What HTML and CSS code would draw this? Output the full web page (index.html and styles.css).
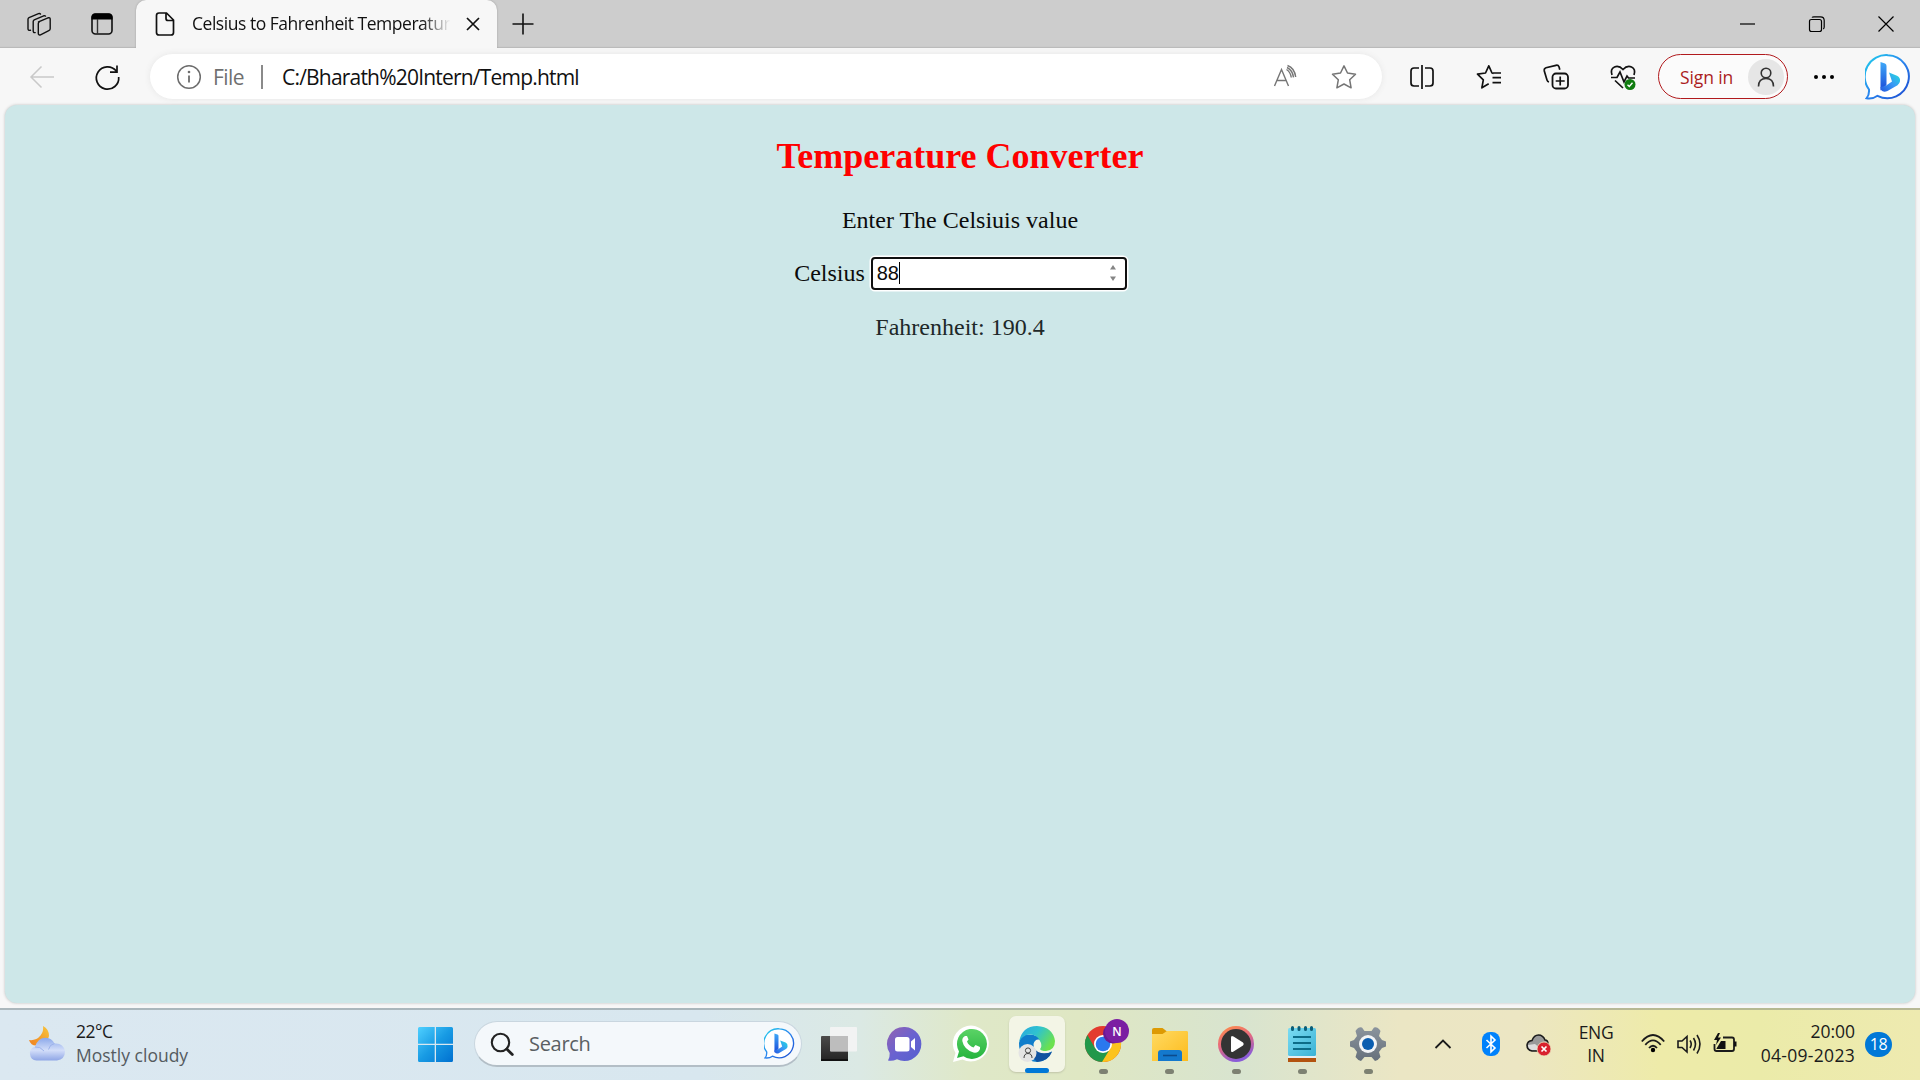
FILE: index.html
```html
<!DOCTYPE html>
<html lang="en">
<head>
<meta charset="utf-8">
<title>Celsius to Fahrenheit Temperature Converter</title>
<link rel="stylesheet" href="styles.css">
</head>
<body>
<svg width="0" height="0" class="defs">
  <defs>
    <linearGradient id="bingLine" x1="0" y1="0" x2="1" y2="1"><stop offset="0" stop-color="#20d0ec"/><stop offset=".5" stop-color="#2a86ee"/><stop offset="1" stop-color="#1b48cf"/></linearGradient>
    <linearGradient id="bingStem" x1="0" y1="0" x2="0" y2="1"><stop offset="0" stop-color="#3fa9f8"/><stop offset="1" stop-color="#1b4ad8"/></linearGradient>
    <linearGradient id="bingBowl" x1="0" y1="1" x2="1" y2="0"><stop offset="0" stop-color="#2358de"/><stop offset=".5" stop-color="#3a98f5"/><stop offset="1" stop-color="#1fe0dc"/></linearGradient>
    <linearGradient id="win" x1="0" y1="0" x2="1" y2="1"><stop offset="0" stop-color="#4fd0ff"/><stop offset=".5" stop-color="#189be4"/><stop offset="1" stop-color="#0070d0"/></linearGradient>
    <linearGradient id="moon" x1="0" y1="1" x2="1" y2="0"><stop offset="0" stop-color="#ef7f20"/><stop offset="1" stop-color="#f8c63c"/></linearGradient>
    <linearGradient id="cloud" x1="0" y1="0" x2="0" y2="1"><stop offset="0" stop-color="#8ba8ea"/><stop offset=".55" stop-color="#d3def9"/><stop offset="1" stop-color="#8fa6e6"/></linearGradient>
    <linearGradient id="dark" x1="0" y1="0" x2="0" y2="1"><stop offset="0" stop-color="#4b4b4a"/><stop offset="1" stop-color="#232323"/></linearGradient>
    <linearGradient id="chat" x1="0" y1="0" x2="1" y2="1"><stop offset="0" stop-color="#9462b0"/><stop offset=".5" stop-color="#6a62d0"/><stop offset="1" stop-color="#5560cf"/></linearGradient>
    <linearGradient id="wa" x1="0" y1="0" x2="0" y2="1"><stop offset="0" stop-color="#5bd366"/><stop offset="1" stop-color="#26b43e"/></linearGradient>
    <linearGradient id="edgeTop" x1="0" y1="0" x2="1" y2=".5"><stop offset="0" stop-color="#2aa5e0"/><stop offset=".5" stop-color="#2fc3cf"/><stop offset="1" stop-color="#6be14e"/></linearGradient>
    <linearGradient id="folder" x1="0" y1="0" x2="1" y2="1"><stop offset="0" stop-color="#ffda62"/><stop offset="1" stop-color="#fdbb1c"/></linearGradient>
    <linearGradient id="ring" x1="0" y1="0" x2=".4" y2="1"><stop offset="0" stop-color="#ff9245"/><stop offset=".5" stop-color="#e8697c"/><stop offset="1" stop-color="#8a5cd8"/></linearGradient>
    <linearGradient id="note" x1="0" y1="0" x2="1" y2="1"><stop offset="0" stop-color="#7bdcf3"/><stop offset="1" stop-color="#3bb2d5"/></linearGradient>
    <linearGradient id="gear" x1="0" y1="0" x2="0" y2="1"><stop offset="0" stop-color="#8b949d"/><stop offset="1" stop-color="#66707b"/></linearGradient>
    <symbol id="bing" viewBox="0 0 46 46">
      <path d="M23 1.2A21.500 21.500 0 1 1 12.500 41.800C9.500 44 5.500 44.900 1.500 44.300C3.500 42 4.300 39 4 35.500A21.500 21.500 0 0 1 23 1.200Z" fill="#fff" stroke="url(#bingLine)" stroke-width="2"/>
      <path d="M15.500 8l4.500 1.600q1.500.6 1.500 2.300V31l-6 5.500Z" fill="url(#bingStem)"/>
      <path d="M24 18.500l8 3.200q3.500 1.800 3 5.600-.3 2.400-2.500 4l-10 5.700q-4 2-6.500-1L15.500 33l5 -1 6.500-4.500Z" fill="url(#bingBowl)"/>
    </symbol>
  </defs>
</svg>
<div class="screen">
  <header class="tabs">
    <div class="tab-tools">
      <svg class="i24" viewBox="0 0 24 24"><g fill="none" stroke="#111" stroke-width="1.400" stroke-linejoin="round" stroke-linecap="round"><path d="M11.500 9.800l9.500-4q2.200-.5 2.200 1.400v9.600q0 1.200-1.400 1.900l-8.300 4.100q-2.200.7-2.200-1.500V11.400q0-1.100 1-1.600Z"/><path d="M8.200 20.600q-2 .3-2-1.600V9.400q0-1.100 1-1.600l9.500-4q1.300-.3 1.800.3"/><path d="M3.500 18.300Q1 18.700 1 16.800V7.200q0-1.100 1-1.600l9.500-4q1.500-.4 2 .5"/></g></svg>
      <svg class="i24" viewBox="0 0 24 24"><rect x="2" y="2" width="20" height="20" rx="3.500" fill="none" stroke="#111" stroke-width="1.600"/><path d="M1.500 7.500V5Q1.500 1.500 5 1.500H19Q22.500 1.500 22.500 5V7.500Z"/><path d="M7.500 7V22" stroke="#333" stroke-width="1.400"/></svg>
    </div>
    <div class="tab">
      <svg class="i24" viewBox="0 0 24 24"><path d="M6 1h7.500L20.500 8v12.500q0 2.500-2.500 2.500H6q-2.500 0-2.500-2.500v-17Q3.500 1 6 1ZM13 1v5.500q0 2 2 2h5.500" fill="none" stroke="#111" stroke-width="1.700"/></svg>
      <span class="tab-title">Celsius to Fahrenheit Temperature</span>
      <svg class="i14" viewBox="0 0 14 14"><path d="M1 1l12 12M13 1L1 13" stroke="#111" stroke-width="1.700"/></svg>
    </div>
    <svg class="i24 plus" viewBox="0 0 24 24"><path d="M12 1.500v21M1.500 12h21" stroke="#111" stroke-width="1.600"/></svg>
    <div class="window-buttons">
      <svg class="i16" viewBox="0 0 16 16"><path d="M0 8h15" stroke="#000" stroke-width="1.200"/></svg>
      <svg class="i16" viewBox="0 0 16 16"><path d="M2.500 3.500h8q2 0 2 2v8q0 2-2 2h-8q-2 0-2-2v-8q0-2 2-2ZM3 1.500Q3.500.8 5 .8h6.500q3.700 0 3.700 3.700V11q0 1.500-1 2" fill="none" stroke="#000" stroke-width="1.200"/></svg>
      <svg class="i16" viewBox="0 0 16 16"><path d="M.5.500l15 15M15.500.500l-15 15" stroke="#000" stroke-width="1.200"/></svg>
    </div>
  </header>
  <nav class="toolbar">
    <svg class="i26" viewBox="0 0 26 26"><path d="M25 13H2M12.500 2.500L2 13l10.500 10.500" fill="none" stroke="#c9c9c9" stroke-width="1.500"/></svg>
    <svg class="i26" viewBox="0 0 26 26"><path d="M22.300 7A11.200 11.200 0 1 0 24.700 13M23 1.500V8.200H16" fill="none" stroke="#111" stroke-width="1.700"/></svg>
    <div class="address">
      <svg class="i26" viewBox="0 0 26 26"><circle cx="13" cy="13" r="11.300" fill="none" stroke="#6d6d6d" stroke-width="1.500"/><path d="M13 11.500v7" stroke="#6d6d6d" stroke-width="1.800"/><circle cx="13" cy="8" r="1.300" fill="#6d6d6d"/></svg>
      <span class="scheme">File</span>
      <span class="divider"></span>
      <span class="url">C:/Bharath%20Intern/Temp.html</span>
      <svg class="i26 read" viewBox="0 0 26 26"><path d="M2.500 22L9.500 5.500 16.500 22M5 16.500h9M14.500 5.500q4 2.500 4.800 8M15.500 1.500q7 2.500 8.200 11.500M15 3.500q5.500 2.700 6.500 9.800" fill="none" stroke="#757575" stroke-width="1.400"/></svg>
      <svg class="i26" viewBox="0 0 26 26"><path d="M13 1.800l3.500 7.200 8 1.200-5.800 5.600 1.400 8L13 20l-7.100 3.800 1.400-8L1.500 10.200l8-1.200Z" fill="none" stroke="#757575" stroke-width="1.500" stroke-linejoin="round"/></svg>
    </div>
    <div class="actions">
      <svg class="i26" viewBox="0 0 26 26"><path d="M10 4H5Q2 4 2 7v12q0 3 3 3h5M16 4h5q3 0 3 3v12q0 3-3 3h-5M13 1v24" fill="none" stroke="#111" stroke-width="1.700"/></svg>
      <svg class="i26" viewBox="0 0 26 26"><path d="M17.500 9.300L16 9l-3.200-7.200L9.500 9l-8 1.200 5.800 5.600-1.400 8 6.800-4M16.500 13.700H25M16.500 18.700H25M17 9h8" fill="none" stroke="#111" stroke-width="1.700" stroke-linejoin="round"/></svg>
      <svg class="i26" viewBox="0 0 26 26"><rect x="9.500" y="9.500" width="15.500" height="15" rx="3.500" fill="none" stroke="#111" stroke-width="1.800"/><path d="M17.200 12.500v9M12.700 17h9M6 18q-1.500-.3-2-2L1.300 7Q.8 4.500 3 3.700L13 1.300q2.200-.5 3 1.500l.8 3" fill="none" stroke="#111" stroke-width="1.700"/></svg>
      <svg class="i26" viewBox="0 0 26 26"><path d="M2 11Q0 5 4.500 3 9 1.200 13 5.500 17 1.200 21.500 3 26 5 24 11M1 13.500h6l3-5.500 4 10 3-6 1.500 2H25M5 16.500l8 7.500" fill="none" stroke="#111" stroke-width="1.700"/><circle cx="20" cy="20.500" r="5.500" fill="#107c10"/><path d="M17.500 20.700l1.800 1.800 3.200-3.700" fill="none" stroke="#fff" stroke-width="1.400"/></svg>
    </div>
    <div class="signin"><span>Sign in</span><div class="avatar"><svg class="i22" viewBox="0 0 22 22"><circle cx="11" cy="7" r="4.800" fill="none" stroke="#333" stroke-width="1.600"/><path d="M3.500 20.500q0-8 7.500-8t7.500 8" fill="none" stroke="#333" stroke-width="1.600"/></svg></div></div>
    <svg class="dots" viewBox="0 0 22 6"><circle cx="3" cy="3" r="2"/><circle cx="11" cy="3" r="2"/><circle cx="19" cy="3" r="2"/></svg>
    <svg class="bing-big"><use href="#bing"/></svg>
  </nav>
  <main class="page">
    <h1>Temperature Converter</h1>
    <p>Enter The Celsiuis value</p>
    <div class="field"><label>Celsius</label><div class="input"><span class="value">88</span><svg class="spin" viewBox="0 0 8 18"><path d="M1 5.500L4 1l3 4.500ZM1 12.500L4 17l3-4.500Z" fill="#858585"/></svg></div></div>
    <p class="result">Fahrenheit: 190.4</p>
  </main>
  <footer class="taskbar">
    <div class="weather">
      <svg class="i36" viewBox="0 0 36 36"><path d="M14 0Q15 5 11.500 9.500 7 15 0 14 2 20 8 19.500A11 11 0 0 0 20 10Q20 3 14 0Z" fill="url(#moon)"/><path d="M7.500 34.500A7 7 0 0 1 6 20.800Q9 11.500 17 11.800 22.500 12 25.500 17.500 34 16.500 36 25q0 8.500-8 9.500Z" fill="url(#cloud)"/><path d="M6 21q5-1 9 4M25.500 17.500q-5 1-6 6" fill="none" stroke="#9db3ea" stroke-width="1"/></svg>
      <div class="weather-text"><span>22°C</span><span class="muted">Mostly cloudy</span></div>
    </div>
    <div class="center">
      <svg class="start" viewBox="0 0 35 35"><path d="M1.500 0H16.700V16.700H0V1.500Q0 0 1.500 0ZM18 0H33.500Q35 0 35 1.500V16.700H18ZM0 18H16.700V35H1.500Q0 35 0 33.500ZM18 18H35V33.500Q35 35 33.500 35H18Z" fill="url(#win)"/></svg>
      <div class="search"><svg class="i24" viewBox="0 0 24 24"><circle cx="10.500" cy="10.500" r="8.700" fill="none" stroke="#222" stroke-width="2.100"/><path d="M16.800 17l5.500 5.500" stroke="#222" stroke-width="2.800" stroke-linecap="round"/></svg><span>Search</span><svg class="bing-small"><use href="#bing"/></svg></div>
      <div class="apps">
        <div class="app"><svg class="i36" viewBox="0 0 36 36"><rect y="10" width="27" height="25" rx="1" fill="url(#dark)"/><rect y="33" width="27" height="2" fill="#111"/><rect x="9" y="1" width="27" height="24.500" rx="1" fill="#f3f3f3" opacity=".95"/><rect x="9" y="10" width="18" height="15" fill="#bdbdbd"/></svg></div>
        <div class="app"><svg class="i36" viewBox="0 0 36 36"><path d="M18 1A17 17 0 1 1 10 33.300Q5 35.500 1 34.500 3 31 2.700 27A17 17 0 0 1 18 1Z" fill="url(#chat)"/><rect x="8" y="11" width="14.500" height="14.500" rx="2.500" fill="#fff"/><path d="M24 15.500L28 12v12.500L24 21Z" fill="#fff"/></svg></div>
        <div class="app"><svg class="i36" viewBox="0 0 36 36"><path d="M0 36L2.500 27A18 18 0 1 1 9.500 33.500Z" fill="#fff"/><path d="M4 32L6 25.500A15 15 0 1 1 10.500 30.300Z" fill="url(#wa)"/><path d="M12 10q-3 1.500-2.700 5Q11 23.500 20.500 26.500q5 .8 6.500-3.500v-2L22.500 19l-2 2.500Q15.500 19.500 14 15.500l1.500-2L14 10Z" fill="#fff"/></svg></div>
        <div class="app active"><svg class="i36" viewBox="0 0 36 36"><path d="M0 17Q1 8.500 10 8.500 20 9 22 14 16 12 14.500 18 14 27 24 28q6 0 9-3-4 11-15 11A18 18 0 0 1 0 17Z" fill="#107dcb"/><path d="M0 16Q3 0 18 0 34 1 36 15q0 9-9 10-5 0-6-2 2-2 1-6Q19 8 10 8.500 3 9.500 0 16Z" fill="url(#edgeTop)"/><path d="M14.500 22q6 8 18.500 4-4 9-15 10-6-5-3.500-14Z" fill="#12529f"/><circle cx="8.500" cy="27" r="9" fill="#e4e4e4"/><circle cx="9" cy="24.500" r="2.600" fill="none" stroke="#444"/><path d="M5 32q0-4.500 4-4.500t4 4.500" fill="none" stroke="#444"/></svg><i class="mark"></i></div>
        <div class="app"><svg class="i44" viewBox="-4 -8 44 44"><circle cx="18" cy="18" r="18" fill="#e33b2e"/><path d="M2.400 9A18 18 0 0 0 18 36L24 25 10 22Z" fill="#22984a"/><path d="M33.600 9H18v9l7 5-8 13A18 18 0 0 0 33.600 9Z" fill="#fcc31d"/><circle cx="18" cy="18" r="9" fill="#fff"/><circle cx="18" cy="18" r="7.300" fill="#2a78ee"/><circle cx="28" cy="7.500" r="10" fill="#681a94"/><circle cx="32" cy="5" r="12" fill="#7b1fa2"/><text x="32" y="9.500" text-anchor="middle" class="initial">N</text></svg><i class="mark"></i></div>
        <div class="app"><svg class="i36" viewBox="0 0 36 36"><path d="M0 4Q0 2 2 2h8.500L15 5.500V10H0Z" fill="#dd9a04"/><path d="M0 8H10.500L15 5H35Q36 5 36 6.500V35H0Z" fill="url(#folder)"/><path d="M6 35V27q0-3 3-3H27q3 0 3 3v8Z" fill="#1479cd"/><path d="M11 29.500H25" stroke="#0c4b8c" stroke-width="1.600"/></svg><i class="mark"></i></div>
        <div class="app"><svg class="i36" viewBox="0 0 36 36"><circle cx="18" cy="18" r="18" fill="url(#ring)"/><circle cx="18" cy="18" r="15" fill="#343434"/><path d="M13 11.500Q13 9 15.500 10.500L25 16.500q1.500 1.500 0 3L15.500 25.500Q13 27 13 24.500Z" fill="#fff"/></svg><i class="mark"></i></div>
        <div class="app"><svg class="i36" viewBox="0 0 36 36"><rect x="4" y="30" width="28" height="6" fill="#b3530f"/><rect x="4" y="28" width="28" height="4" fill="#e9eef0"/><rect x="4" y="2" width="28" height="28" rx="1.500" fill="url(#note)"/><path d="M9 11H27M9 17H27M9 23H27" stroke="#0c6c88" stroke-width="1.800"/><path d="M8.500 1.500v2M15 1.500v2M21.500 1.500v2M27.500 1.500v2" stroke="#0c5e78" stroke-width="3" stroke-linecap="round"/></svg><i class="mark"></i></div>
        <div class="app"><svg class="i36" viewBox="0 0 36 36"><path d="M7 3Q9 .5 12 1.500L14.500 5h7L24 1.500Q27 .5 29 3L30.500 5 29 10l3 4 4 1.500v5L32 22l-3 4 1.500 5Q28 34.500 25 35L21.500 31h-7L11 35Q8 34.500 5.500 31L7 26 4 22 0 20.500v-5L4 14l3-4L5.500 5Z" fill="url(#gear)"/><circle cx="18" cy="18" r="9" fill="#f2f4f6"/><circle cx="18" cy="18" r="6" fill="#0a5db0"/></svg><i class="mark"></i></div>
      </div>
    </div>
    <div class="tray">
      <svg class="i20 chev" viewBox="0 0 20 20"><path d="M2.500 14L10 6.500l7.500 7.500" fill="none" stroke="#1b1b1b" stroke-width="1.800"/></svg>
      <svg class="bt" viewBox="0 0 18 24"><rect width="18" height="24" rx="8" fill="#0082fc"/><path d="M4.500 8L13 16 9 19.800V4.200L13 8 4.500 16" fill="none" stroke="#fff" stroke-width="1.600"/></svg>
      <svg class="cloud" viewBox="0 0 26 24"><path d="M6 19Q1 18 1 13 1.500 9 6 8.500 8 3 12.500 3 17 3 19 8q3 0 3 4v7Z" fill="#999" stroke="#1b1b1b" stroke-width="1.600"/><path d="M6 18Q2 17 2 13l7-1 7 6Z" fill="#ddd"/><circle cx="18" cy="17" r="7" fill="#d8212e" stroke="#ece8c0" stroke-width=".8"/><path d="M15.500 14.500l5 5M20.500 14.500l-5 5" stroke="#fff" stroke-width="1.700"/></svg>
      <div class="lang"><span>ENG</span><span>IN</span></div>
      <div class="status">
        <svg class="i24" viewBox="0 0 24 24"><path d="M.8 9.500Q12-3.500 23.200 9.500M4.300 12.800Q12 4 19.700 12.800M8 16Q12 11.500 16 16" fill="none" stroke="#1b1b1b" stroke-width="1.800"/><circle cx="12" cy="18" r="2.200"/></svg>
        <svg class="i24" viewBox="0 0 24 24"><path d="M1 9v6.500h4l5 4.500V4.500L5 9ZM13 8.500q2.500 3.500 0 7.500M16.500 6q4 6 0 12.500M20 3q6 9 0 18.500" fill="none" stroke="#1b1b1b" stroke-width="1.600"/></svg>
        <svg class="i24" viewBox="0 0 24 24"><path d="M10 5.500h9q2 0 2 2v9.500q0 2-2 2H3.500q-2 0-2-2V12" fill="none" stroke="#1b1b1b" stroke-width="1.800"/><path d="M3.500 16.500L8 9h4.500v8H3.500ZM21 9.500h2.500v5H21ZM5 1L1 8h3l-1 5 5-7.500H5L7 1Z" fill="#111"/></svg>
      </div>
      <div class="clock"><span>20:00</span><span>04-09-2023</span></div>
      <span class="badge">18</span>
    </div>
  </footer>
</div>
</body>
</html>
```
FILE: styles.css
```css
* { box-sizing: border-box; }
body { margin: 0; font-family: "Open Sans", "Noto Sans", sans-serif; color: #1b1b1b; }
svg { display: block; flex: none; overflow: visible; }
span { white-space: nowrap; }
.defs { position: absolute; }
.screen { width: 1920px; height: 1080px; display: flex; flex-direction: column; overflow: hidden; background: #f7f7f7; }
.i14 { width: 14px; height: 14px; }
.i16 { width: 16px; height: 16px; }
.i20 { width: 20px; height: 20px; }
.i22 { width: 22px; height: 22px; }
.i24 { width: 24px; height: 24px; }
.i26 { width: 26px; height: 26px; }
.i36 { width: 36px; height: 36px; }
.i44 { width: 44px; height: 44px; }

.tabs { height: 48px; display: flex; align-items: center; background: #cdcdcd; box-shadow: inset 0 -2px 1px -1px #b9b9b9; }
.tab-tools { width: 136px; display: flex; gap: 39px; padding-left: 27px; }
.tab { width: 361px; height: 48px; background: #f7f7f7; border-radius: 10px 10px 0 0; display: flex; align-items: center; padding: 0 17px; box-shadow: 0 0 2px #999; clip-path: inset(0 -3px 0 -3px); }
.tab-title { width: 262px; margin: 0 13px 2px 15px; overflow: hidden; font-size: 17.5px; line-height: 28px; letter-spacing: -0.47px; color: #111; -webkit-mask-image: linear-gradient(90deg, #000 88%, transparent 99%); mask-image: linear-gradient(90deg, #000 88%, transparent 99%); }
.plus { margin: 0 0 1px 14px; }
.window-buttons { margin: 0 0 1px auto; display: flex; gap: 53px; padding-right: 26px; }

.toolbar { height: 57px; display: flex; align-items: center; padding: 0 9px 0 29px; }
.toolbar > .i26 + .i26 { margin-left: 39px; }
.address { width: 1232px; height: 45px; margin-left: 30px; border-radius: 23px; background: #fff; box-shadow: 0 0 6px #e6e6e6; display: flex; align-items: center; padding: 0 25px 0 26px; font-size: 21px; }
.scheme { width: 31px; margin-left: 11px; color: #707070; letter-spacing: -0.6px; }
.divider { width: 2px; height: 24px; margin: 0 19px 0 17px; background: #8a8a8a; }
.url { color: #111; letter-spacing: -0.8px; }
.read { margin: 0 33px 0 auto; }
.actions { display: flex; gap: 41px; margin-left: 27px; }
.signin { width: 130px; height: 45px; margin-left: 22px; border: 1.5px solid #b11a1d; border-radius: 23px; background: #fbfbfb; display: flex; align-items: center; justify-content: space-between; padding: 0 3px 0 21px; color: #ab1d22; font-size: 17.5px; letter-spacing: -0.1px; }
.avatar { width: 36px; height: 36px; border-radius: 50%; background: #e6e6e6; display: grid; place-items: center; }
.dots { width: 22px; height: 6px; margin-left: 25px; }
.bing-big { width: 46px; height: 46px; margin-left: auto; }

.page { height: 898px; margin: 0 5px; padding-top: 30px; border-radius: 12px; background: #cde7e8; box-shadow: 0 0 3px #bbb; display: flex; flex-direction: column; align-items: center; font: 24px/28px "Liberation Serif", serif; color: #0b0b0b; }
.page h1 { margin: 0 0 29px; font-size: 36px; line-height: 42px; color: #f00; }
.page p { margin: 0; }
.field { display: flex; align-items: center; gap: 6px; height: 34px; margin: 22px 0 23px; padding-left: 1px; }
.input { width: 256px; height: 33px; border: 2.5px solid #101010; border-radius: 4px; box-shadow: 0 0 0 1.5px #fff; background: #fff; display: flex; align-items: center; justify-content: space-between; padding: 0 8px 0 4px; font: 20px/22px "Liberation Sans", sans-serif; }
.value { border-right: 1px solid #000; letter-spacing: -0.1px; }
.spin { width: 8px; height: 18px; }
.page .result { color: #202828; }

.taskbar { height: 72px; margin-top: auto; padding-bottom: 2px; border-top: 2px solid rgba(100, 110, 110, .4); display: grid; grid-template-columns: 418px 983px 1fr; align-items: center; background: linear-gradient(90deg, #dbe8f1 0, #d8e7ef 700px, #dbe9e4 860px, #dfe8c8 970px, #dfe7c3 1080px, #d8e4cf 1240px, #ebe6c4 1400px, #ece6c3 1520px, #eeeba9 1660px, #ebeba9 1760px, #eeeab0 1920px); background-clip: border-box; background-origin: border-box; }
.weather { display: flex; gap: 11px; padding-left: 29px; align-items: center; }
.weather-text, .lang, .clock { display: flex; flex-direction: column; font-size: 17.5px; line-height: 24px; }
.weather-text { margin-top: -2px; letter-spacing: -0.5px; }
.muted { color: #555b60; letter-spacing: 0; }
.center { display: flex; align-items: center; }
.start { width: 35px; height: 35px; }
.search { width: 328px; height: 46px; margin-left: 21px; border: 1.5px solid #c9d6df; border-bottom: 2px solid #b3bec6; border-radius: 23px; background: #f4f8fb; display: flex; align-items: center; padding: 0 6px 0 15px; font-size: 20px; color: #5a5f63; }
.search span { margin: 0 auto 0 15px; letter-spacing: -0.3px; }
.bing-small { width: 31px; height: 31px; }
.apps { display: flex; margin-left: 4px; }
.app { width: 66.1px; height: 58px; display: grid; place-items: center; position: relative; }
.app .i44 { transform: translate(0, -4px); }
.active::before { content: ""; position: absolute; inset: 1px 5px; border-radius: 7px; background: #f3f5e6; box-shadow: 0 1px 2px #bfc4a8; }
.active svg { position: relative; }
.mark { position: absolute; bottom: -1px; left: 29px; width: 9px; height: 5px; border-radius: 3px; background: #7d8172; }
.active .mark { left: 21px; width: 24px; bottom: 0; background: #0078d7; }
.initial { font: 600 12px "Open Sans", sans-serif; fill: #fff; }
.tray { display: flex; align-items: center; padding-left: 32px; }
.bt { width: 18px; height: 24px; margin-left: 29px; }
.cloud { width: 26px; height: 24px; margin-left: 26px; }
.lang { width: 36px; margin-left: 26px; align-items: center; line-height: 23px; letter-spacing: -0.3px; }
.status { display: flex; gap: 12px; margin-left: 27px; }
.clock { width: 94px; margin: -2px 0 0 24px; align-items: flex-end; letter-spacing: 0.3px; }
.clock span:first-child { letter-spacing: 0; }
.badge { width: 27px; height: 25px; margin-left: 10px; border-radius: 13px; background: #0078d7; color: #fff; font-size: 16px; line-height: 24px; text-align: center; letter-spacing: -0.5px; }
```
